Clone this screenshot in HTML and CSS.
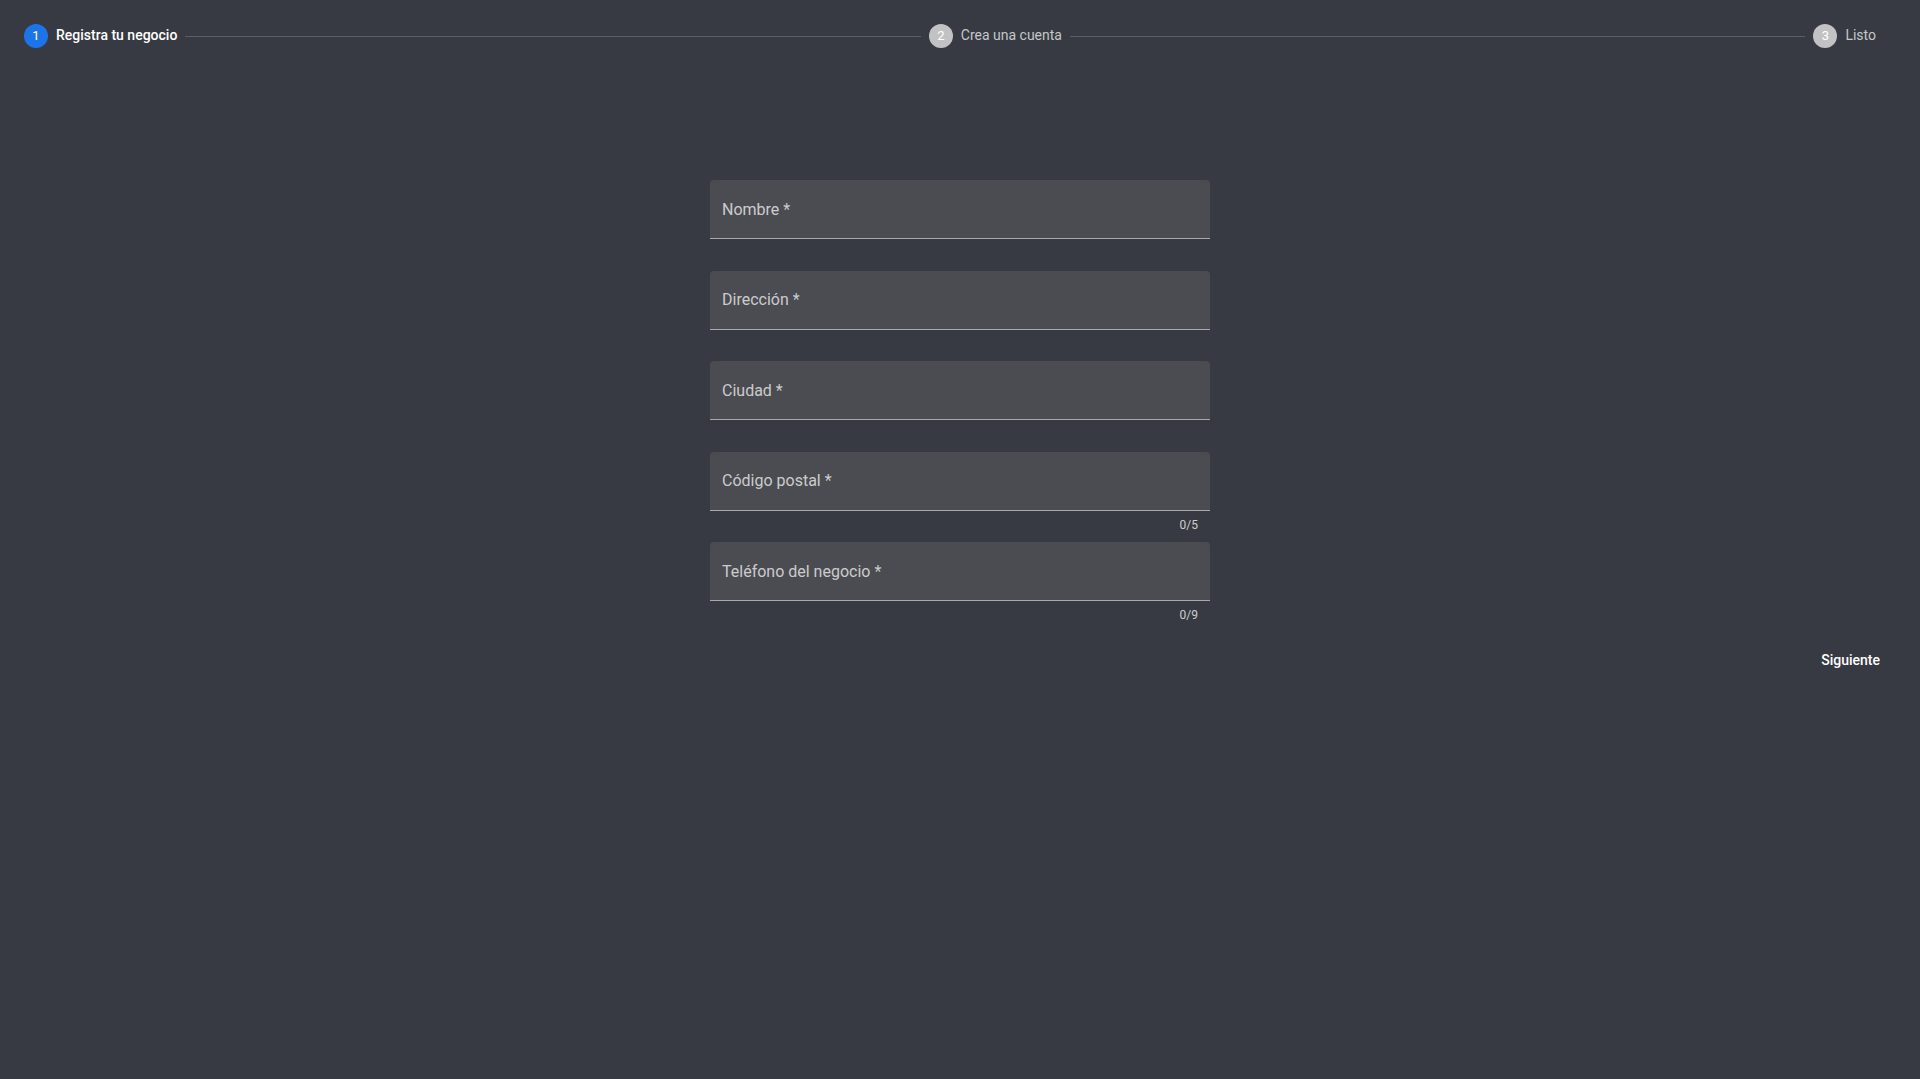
FILE: index.html
```html
<!DOCTYPE html>
<html lang="es">
<head>
<meta charset="utf-8">
<title>Registra tu negocio</title>
<link rel="stylesheet" href="styles.css">
</head>
<body>
<div class="page">
  <div class="stepper">
    <div class="step active">
      <span class="step-icon">1</span>
      <span class="step-label">Registra tu negocio</span>
    </div>
    <div class="connector"></div>
    <div class="step">
      <span class="step-icon">2</span>
      <span class="step-label">Crea una cuenta</span>
    </div>
    <div class="connector"></div>
    <div class="step">
      <span class="step-icon">3</span>
      <span class="step-label">Listo</span>
    </div>
  </div>

  <form class="form">
    <div class="field-block">
      <div class="field"><span class="field-label">Nombre *</span></div>
    </div>
    <div class="field-block">
      <div class="field"><span class="field-label">Dirección *</span></div>
    </div>
    <div class="field-block">
      <div class="field"><span class="field-label">Ciudad *</span></div>
    </div>
    <div class="field-block">
      <div class="field"><span class="field-label">Código postal *</span></div>
      <div class="helper">0/5</div>
    </div>
    <div class="field-block">
      <div class="field"><span class="field-label">Teléfono del negocio *</span></div>
      <div class="helper">0/9</div>
    </div>
  </form>

  <div class="actions">
    <button class="btn-next" type="button">Siguiente</button>
  </div>
</div>
</body>
</html>
```

FILE: styles.css
```css
html, body {
  margin: 0;
  padding: 0;
  background: #373a42;
  height: 100%;
}

body {
  font-family: Roboto, "Liberation Sans", Arial, sans-serif;
  color: #ffffff;
}

.page {
  min-height: 100%;
}

.stepper {
  display: flex;
  align-items: center;
  padding: 24px 36px 0 16px;
  height: 24px;
}

.step {
  display: flex;
  align-items: center;
  padding: 0 8px;
}

.step-icon {
  width: 24px;
  height: 24px;
  border-radius: 50%;
  background: #c2c2c4;
  color: #ffffff;
  font-size: 13px;
  line-height: 24px;
  text-align: center;
  flex-shrink: 0;
}

.step.active .step-icon {
  background: #1d74e9;
}

.step-label {
  padding-left: 8px;
  padding-bottom: 2px;
  font-size: 14px;
  line-height: 20px;
  color: rgba(255, 255, 255, 0.72);
  white-space: nowrap;
}

.step.active .step-label {
  color: #ffffff;
  font-weight: 500;
}

.connector {
  flex: 1;
  height: 0;
  border-top: 1px solid #5c5e64;
}

.form {
  width: 500px;
  margin: 132px auto 0;
  display: flex;
  flex-direction: column;
}

.field-block {
  height: 90.5px;
  display: flex;
  flex-direction: column;
}

.field {
  height: 58px;
  background: #4b4c51;
  border-radius: 4px 4px 0 0;
  border-bottom: 1px solid #a8a9ab;
  display: flex;
  align-items: center;
  padding: 0 12px;
}

.field-label {
  font-size: 16px;
  color: rgba(255, 255, 255, 0.72);
  line-height: 20px;
  padding-top: 1px;
}

.helper {
  margin: 4px 12px 0;
  font-size: 12px;
  line-height: 20px;
  color: rgba(255, 255, 255, 0.75);
  text-align: right;
}

.actions {
  display: flex;
  justify-content: flex-end;
  padding-right: 32px;
  margin-top: 9px;
}

.btn-next {
  background: transparent;
  border: none;
  color: #ffffff;
  font-family: Roboto, "Liberation Sans", Arial, sans-serif;
  font-size: 14px;
  font-weight: 500;
  line-height: 24px;
  padding: 6px 8px;
  cursor: pointer;
}
```
